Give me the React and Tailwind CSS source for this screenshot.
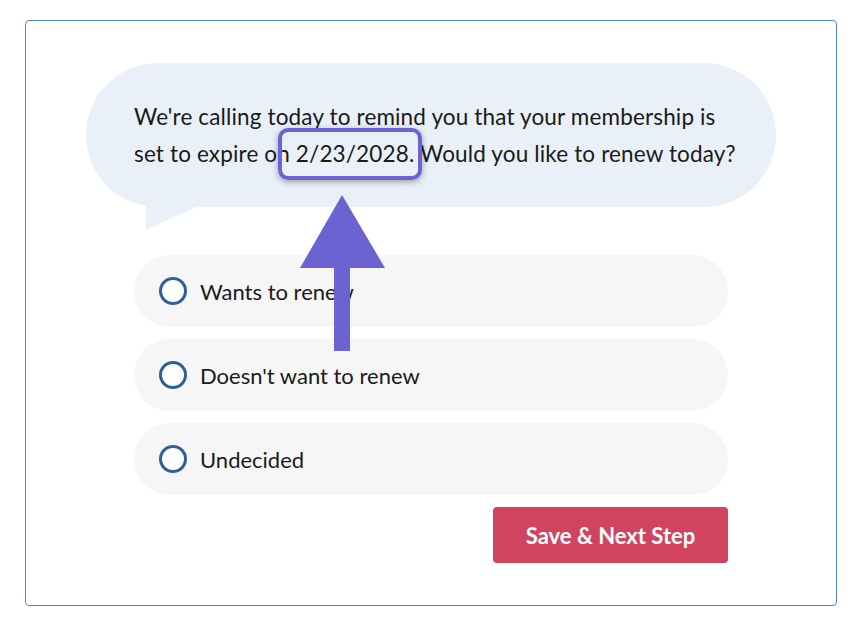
export default function App() {
  const options = ['Wants to renew', "Doesn't want to renew", 'Undecided']

  return (
    <div className="relative w-[862px] h-[641px] bg-white pt-[20px] pl-[25px] font-['Lato',sans-serif] text-[#1a1a1a]">
      {/* Card */}
      <div className="w-[812px] h-[586px] border border-[#4a86d8] rounded-[4px] pt-[42px]">
        {/* Speech bubble */}
        <div className="relative ml-[60px] w-[690px] h-[144px] rounded-full bg-[#e9f0f8] flex items-center pl-[48px]">
          <p className="w-[610px] text-[22.5px] leading-[37px] tracking-[0.15px]">
            We're calling today to remind you that your membership is set to expire on{' '}
            <span className="relative">
              2/23/2028.
              <span className="absolute -left-[18px] -right-[8px] -top-[12px] -bottom-[13px] border-[4px] border-[#6c63d3] rounded-[10px] shadow-[0_2px_6px_rgba(0,0,0,0.35)]"></span>
            </span>{' '}
            Would you like to renew today?
          </p>
          <svg className="absolute left-[60px] -bottom-[23px]" width="52" height="24" viewBox="0 0 52 24">
            <path d="M0 0 L52 0 L0 24 Z" fill="#e9f0f8" />
          </svg>
        </div>

        {/* Options */}
        <div className="ml-[108px] mt-[48px] w-[594px] flex flex-col gap-[12px]">
          {options.map((o) => (
            <div key={o} className="h-[72px] rounded-full bg-[#f6f6f6] flex items-center pl-[25px] gap-[13px]">
              <span className="w-[28px] h-[28px] rounded-full border-[3px] border-[#2f5f98] bg-white"></span>
              <span className="text-[22px]">{o}</span>
            </div>
          ))}
          <div className="flex justify-end">
            <button className="w-[235px] h-[56px] rounded-[4px] bg-[#d1435f] text-white text-[22px] font-bold">
              Save &amp; Next Step
            </button>
          </div>
        </div>
      </div>

      {/* Annotation arrow */}
      <svg className="absolute left-[298px] top-[193px]" width="90" height="160" viewBox="0 0 90 160">
        <path d="M44 2 L87 75 L2 75 Z" fill="#6c63d3" />
        <rect x="36" y="74" width="16" height="84" fill="#6c63d3" />
      </svg>
    </div>
  )
}
